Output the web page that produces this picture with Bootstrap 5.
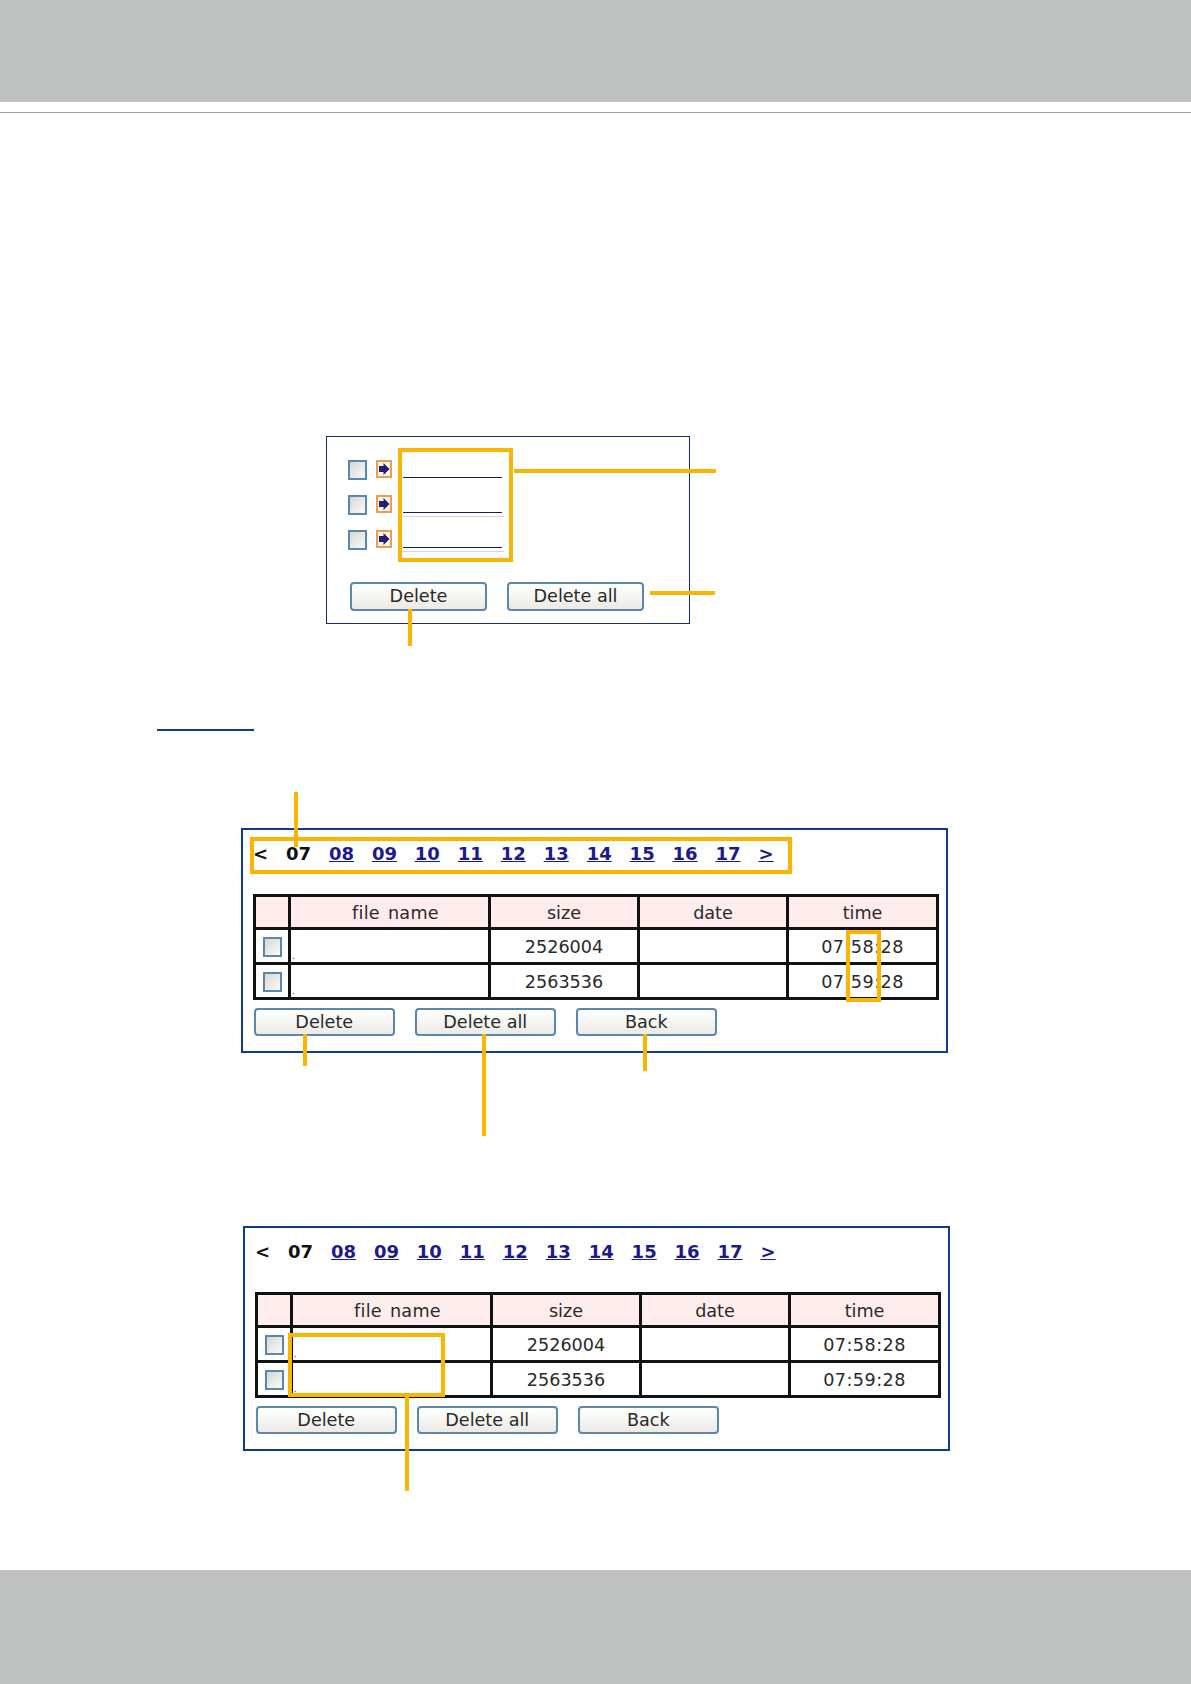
<!DOCTYPE html>
<html lang="en">
<head>
    <meta charset="UTF-8">
    <meta name="viewport" content="width=device-width, initial-scale=1.0">
    <title>Recording files</title>
    <link href="https://cdn.jsdelivr.net/npm/bootstrap@5.3.0/dist/css/bootstrap.min.css" rel="stylesheet">
    <style>
        body {
            min-height: 1684px;
            font-family: "DejaVu Sans", Verdana, sans-serif;
            color: #2a2a2a;
            background: #fff;
        }

        /* page bands */
        .band-top { height: 102px; background: #bfc1c0; }
        .band-bottom { height: 114px; background: #bfc1c0; }
        .band-rule { height: 1px; margin-top: 10px; background: #a0a0a0; }

        /* panels */
        .shot-panel { position: relative; box-sizing: border-box; }
        .panel-list {
            width: 364px;
            height: 188px;
            margin: 323px 0 0 326px;
            padding: 23px 0 0 21px;
            border: 1px solid #1a2a7a;
        }
        .panel-files {
            width: 707px;
            height: 225px;
            padding: 7px 0 0 10px;
            border: 2px solid #0e3a8c;
        }
        .panel-a { margin: 97px 0 0 241px; }
        .panel-b { margin: 173px 0 0 243px; }

        .sub-rule { width: 97px; height: 2px; margin: 105px 0 0 157px; background: #123c8f; }

        /* list rows */
        .file-row { height: 35.2px; }
        .file-link { display: block; width: 99px; height: 18px; border-bottom: 1px solid #1a1a66; }
        .file-ghost { width: 101px; height: 4px; border-bottom: 1px solid #d5d8e0; }
        .file-col { margin-left: 11px; }
        .arrow-ico { display: block; width: 16px; height: 18px; margin-left: 9px; }

        .form-check-input.rec-check {
            width: 19px;
            height: 20px;
            margin: 0;
            flex: none;
            border: 2px solid #5b87ab;
            border-radius: 0;
            background: linear-gradient(135deg, #d6d6d2, #fbfbfa);
        }

        /* buttons */
        .btn.rec-btn {
            width: 140.5px;
            height: 28px;
            padding: 0;
            font-size: 17.6px;
            line-height: 23px;
            color: #2a2a2a;
            border: 2px solid #5b87ab;
            border-radius: 4px;
            background: linear-gradient(#fff, #ebeae4);
        }
        .list-btns { margin: 16px 0 0 2px; gap: 20px; }
        .list-btns .btn.rec-btn { width: 137px; height: 29px; line-height: 24px; }
        .file-btns { margin: 8px 0 0 1px; gap: 20.5px; }

        /* hour pager */
        .hour-pager {
            height: 37px;
            padding-bottom: 5px;
            gap: 17.9px;
            font-size: 18px;
            font-weight: 700;
            color: #111;
        }
        .hour-pager a { color: #1a1a8c; }

        /* table */
        .rec-table {
            width: 683px;
            margin: 20px 0 0 0;
            table-layout: fixed;
            border-collapse: collapse;
            font-size: 17.6px;
            --bs-table-bg: #fff;
        }
        .rec-table > :not(caption) > * > * {
            padding: 2px 0 0;
            text-align: center;
            vertical-align: middle;
            font-weight: 400;
            color: #2a2a2a;
            border: 3px solid #111;
        }
        .rec-table > thead > tr > th { height: 33px; background: #ffecec; }
        .rec-table > thead > tr > th.head-name { padding-left: 12px; word-spacing: 2px; letter-spacing: .3px; }
        .rec-table > tbody > tr > td { height: 35px; }
        .rec-table > tbody > tr > td.time-cell { letter-spacing: .45px; }
        .rec-table .rec-check { display: block; margin-left: 7px; }
        .rec-table > tbody > tr > td.name-cell { text-align: left; vertical-align: bottom; padding-left: 1px; font-size: 9px; line-height: 12px; }
        .name-cell a { color: #1a1a8c; text-decoration: none; }
        .col-check { width: 35px; }
        .col-name { width: 200px; }
        .col-size { width: 149px; }
        .col-date { width: 149px; }
        .col-time { width: 150px; }

        /* orange callouts over the screenshots */
        .call-box { position: absolute; border: 4px solid #f9b500; }
        .call-line { position: absolute; background: #f9b500; }
        .cb-list { left: 71px; top: 11px; width: 115px; height: 114px; }
        .cl-list { left: 187px; top: 32px; width: 202px; height: 4px; }
        .cl-delall { left: 323px; top: 154px; width: 65px; height: 4px; }
        .cl-del { left: 81px; top: 172px; width: 4px; height: 37px; }
        .cb-pager { left: 7px; top: 7px; width: 542px; height: 37px; }
        .cb-time { left: 603px; top: 100px; width: 35px; height: 72px; }
        .cl-pager { left: 51px; top: -38px; width: 4px; height: 55px; }
        .cl-a-del { left: 60px; top: 204px; width: 4px; height: 32px; }
        .cl-a-delall { left: 239px; top: 204px; width: 4px; height: 102px; }
        .cl-a-back { left: 400px; top: 204px; width: 4px; height: 37px; }
        .cb-names { left: 43px; top: 105px; width: 157px; height: 64px; }
        .cl-names { left: 160px; top: 169px; width: 4px; height: 94px; }
    </style>
</head>
<body class="d-flex flex-column">

    <div class="band-top"></div>
    <div class="band-rule"></div>

    <!-- file list -->
    <div class="shot-panel panel-list">
        <div class="d-flex file-row">
            <input class="form-check-input rec-check" type="checkbox" aria-label="select">
            <svg class="arrow-ico" viewBox="0 0 16 18"><rect x="1" y="1" width="14" height="16" fill="#fdf3e8" stroke="#ef9a55" stroke-width="2"/><path d="M3 6h4.500V3l6 6-6 6v-3H3z" fill="#1f1f6e"/></svg>
            <div class="file-col"><a class="file-link" href="#"></a></div>
        </div>
        <div class="d-flex file-row">
            <input class="form-check-input rec-check" type="checkbox" aria-label="select">
            <svg class="arrow-ico" viewBox="0 0 16 18"><rect x="1" y="1" width="14" height="16" fill="#fdf3e8" stroke="#ef9a55" stroke-width="2"/><path d="M3 6h4.500V3l6 6-6 6v-3H3z" fill="#1f1f6e"/></svg>
            <div class="file-col"><a class="file-link" href="#"></a><div class="file-ghost"></div></div>
        </div>
        <div class="d-flex file-row">
            <input class="form-check-input rec-check" type="checkbox" aria-label="select">
            <svg class="arrow-ico" viewBox="0 0 16 18"><rect x="1" y="1" width="14" height="16" fill="#fdf3e8" stroke="#ef9a55" stroke-width="2"/><path d="M3 6h4.500V3l6 6-6 6v-3H3z" fill="#1f1f6e"/></svg>
            <div class="file-col"><a class="file-link" href="#"></a><div class="file-ghost"></div></div>
        </div>
        <div class="d-flex list-btns">
            <button class="btn rec-btn" type="button">Delete</button>
            <button class="btn rec-btn" type="button">Delete all</button>
        </div>
        <div class="call-box cb-list"></div>
        <div class="call-line cl-list"></div>
        <div class="call-line cl-delall"></div>
        <div class="call-line cl-del"></div>
    </div>

    <div class="sub-rule"></div>

    <!-- first table view -->
    <div class="shot-panel panel-files panel-a">
        <div class="d-flex align-items-center hour-pager">
            <span>&lt;</span><span>07</span>
            <a href="#">08</a><a href="#">09</a><a href="#">10</a><a href="#">11</a><a href="#">12</a>
            <a href="#">13</a><a href="#">14</a><a href="#">15</a><a href="#">16</a><a href="#">17</a>
            <a href="#">&gt;</a>
        </div>
        <table class="table table-bordered rec-table">
            <colgroup><col class="col-check"><col class="col-name"><col class="col-size"><col class="col-date"><col class="col-time"></colgroup>
            <thead><tr><th></th><th class="head-name">file name</th><th>size</th><th>date</th><th>time</th></tr></thead>
            <tbody>
                <tr><td><input class="form-check-input rec-check" type="checkbox" aria-label="select"></td><td class="name-cell"><a href="#">.</a></td><td>2526004</td><td></td><td class="time-cell">07:58:28</td></tr>
                <tr><td><input class="form-check-input rec-check" type="checkbox" aria-label="select"></td><td class="name-cell"><a href="#">.</a></td><td>2563536</td><td></td><td class="time-cell">07:59:28</td></tr>
            </tbody>
        </table>
        <div class="d-flex file-btns">
            <button class="btn rec-btn" type="button">Delete</button>
            <button class="btn rec-btn" type="button">Delete all</button>
            <button class="btn rec-btn" type="button">Back</button>
        </div>
        <div class="call-box cb-pager"></div>
        <div class="call-box cb-time"></div>
        <div class="call-line cl-pager"></div>
        <div class="call-line cl-a-del"></div>
        <div class="call-line cl-a-delall"></div>
        <div class="call-line cl-a-back"></div>
    </div>

    <!-- second table view -->
    <div class="shot-panel panel-files panel-b">
        <div class="d-flex align-items-center hour-pager">
            <span>&lt;</span><span>07</span>
            <a href="#">08</a><a href="#">09</a><a href="#">10</a><a href="#">11</a><a href="#">12</a>
            <a href="#">13</a><a href="#">14</a><a href="#">15</a><a href="#">16</a><a href="#">17</a>
            <a href="#">&gt;</a>
        </div>
        <table class="table table-bordered rec-table">
            <colgroup><col class="col-check"><col class="col-name"><col class="col-size"><col class="col-date"><col class="col-time"></colgroup>
            <thead><tr><th></th><th class="head-name">file name</th><th>size</th><th>date</th><th>time</th></tr></thead>
            <tbody>
                <tr><td><input class="form-check-input rec-check" type="checkbox" aria-label="select"></td><td class="name-cell"><a href="#">.</a></td><td>2526004</td><td></td><td class="time-cell">07:58:28</td></tr>
                <tr><td><input class="form-check-input rec-check" type="checkbox" aria-label="select"></td><td class="name-cell"><a href="#">.</a></td><td>2563536</td><td></td><td class="time-cell">07:59:28</td></tr>
            </tbody>
        </table>
        <div class="d-flex file-btns">
            <button class="btn rec-btn" type="button">Delete</button>
            <button class="btn rec-btn" type="button">Delete all</button>
            <button class="btn rec-btn" type="button">Back</button>
        </div>
        <div class="call-box cb-names"></div>
        <div class="call-line cl-names"></div>
    </div>

    <div class="band-bottom mt-auto"></div>

    <script src="https://cdn.jsdelivr.net/npm/bootstrap@5.3.0/dist/js/bootstrap.bundle.min.js"></script>
</body>
</html>
